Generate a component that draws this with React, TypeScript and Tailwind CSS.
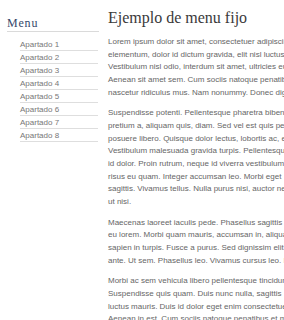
const items = [
  "Apartado 1",
  "Apartado 2",
  "Apartado 3",
  "Apartado 4",
  "Apartado 5",
  "Apartado 6",
  "Apartado 7",
  "Apartado 8",
];

// each paragraph is kept line by line, the page is wider than the window
const paragraphs = [
  [
    "Lorem ipsum dolor sit amet, consectetuer adipiscing elit. Maecenas porttitor congue massa.",
    "elementum, dolor id dictum gravida, elit nisl luctus lorem, et aliquet",
    "Vestibulum nisl odio, interdum sit amet, ultricies eu, tincidunt a, nibh.",
    "Aenean sit amet sem. Cum sociis natoque penatibus et magnis dis parturient",
    "nascetur ridiculus mus. Nam nonummy. Donec dignissim.",
  ],
  [
    "Suspendisse potenti. Pellentesque pharetra bibendum nunc. Sed",
    "pretium a, aliquam quis, diam. Sed vel est quis pede",
    "posuere libero. Quisque dolor lectus, lobortis ac, euismod",
    "Vestibulum malesuada gravida turpis. Pellentesque habitant",
    "id dolor. Proin rutrum, neque id viverra vestibulum, lacus",
    "risus eu quam. Integer accumsan leo. Morbi eget",
    "sagittis. Vivamus tellus. Nulla purus nisi, auctor nec,",
    "ut nisi.",
  ],
  [
    "Maecenas laoreet iaculis pede. Phasellus sagittis",
    "eu lorem. Morbi quam mauris, accumsan in, aliquam",
    "sapien in turpis. Fusce a purus. Sed dignissim elit",
    "ante. Ut sem. Phasellus leo. Vivamus cursus leo. Nam",
  ],
  [
    "Morbi ac sem vehicula libero pellentesque tincidunt.",
    "Suspendisse quis quam. Duis nunc nulla, sagittis",
    "luctus mauris. Duis id dolor eget enim consectetuer",
    "Aenean in est. Cum sociis natoque penatibus et magnis",
  ],
];

export default function App() {
  return (
    <div className="flex h-[320px] w-[284px] overflow-hidden bg-white font-['Liberation_Sans',Arial,sans-serif]">
      {/* fixed menu */}
      <div className="w-[108px] shrink-0 pt-[16px] pl-[7px] pr-[9px]">
        <h2 className="border-b border-[#dadada] pb-[1px] font-['Liberation_Serif',serif] text-[12px] font-normal leading-[14px] tracking-[0.8px] text-[#36486a]">
          Menu
        </h2>
        <ul className="mt-[6px] ml-[13px] mr-[1px]">
          {items.map((it) => (
            <li
              key={it}
              className="border-b border-[#dedede] pt-[2px] text-[8px] leading-[10px] text-[#777]"
            >
              {it}
            </li>
          ))}
        </ul>
      </div>

      <div className="min-w-0 flex-1 pt-[8px]">
        <h1 className="font-['Liberation_Serif',serif] text-[16px] leading-[20px] font-normal whitespace-nowrap text-[#3a3a3a]">
          Ejemplo de menu fijo
        </h1>
        <div className="mt-[8px] flex flex-col gap-[8px]">
          {paragraphs.map((p, i) => (
            <p key={i} className="text-[8px] leading-[12.67px] text-[#666]">
              {p.map((line, j) => (
                <span key={j} className="block whitespace-nowrap">
                  {line}
                </span>
              ))}
            </p>
          ))}
        </div>
      </div>
    </div>
  );
}
